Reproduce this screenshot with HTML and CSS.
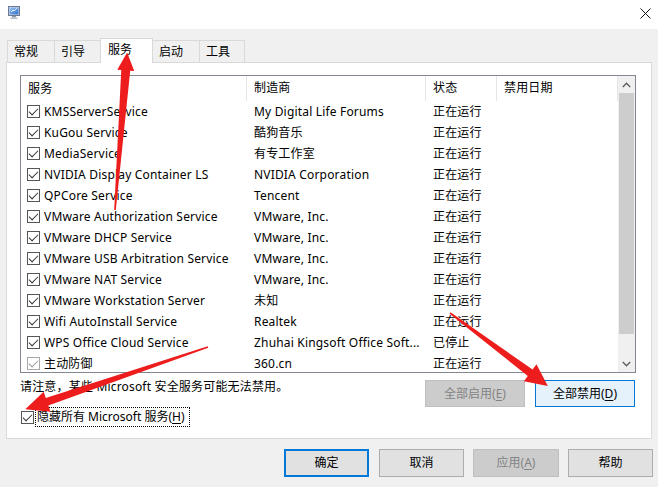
FILE: index.html
```html
<!DOCTYPE html>
<html lang="zh-CN">
<head>
<meta charset="utf-8">
<title>系统配置</title>
<link rel="stylesheet" href="styles.css">
</head>
<body>
<div class="window">
  <div class="titlebar">
    <svg class="app-icon" width="12" height="13" viewBox="0 0 12 13">
      <defs>
        <linearGradient id="scr" x1="0" y1="0" x2="1" y2="1">
          <stop offset="0" stop-color="#9ec6f2"/>
          <stop offset="1" stop-color="#2f6fd0"/>
        </linearGradient>
      </defs>
      <rect x="0.5" y="0.5" width="11" height="9" fill="#d8dde6" stroke="#6b7a90"/>
      <rect x="1.5" y="1.5" width="9" height="7" fill="url(#scr)"/>
      <path d="M3 6 L5 4 L6 5 L9 2" stroke="#ffffff" stroke-width="0.8" fill="none"/>
      <rect x="4" y="10" width="4" height="1.5" fill="#8a94a3"/>
      <rect x="2.5" y="11.5" width="7" height="1.5" fill="#b8bfc9"/>
    </svg>
    <svg class="close" width="11" height="11" viewBox="0 0 11 11">
      <path d="M0.5 0.5 L10.5 10.5 M10.5 0.5 L0.5 10.5" stroke="#111" stroke-width="1" fill="none"/>
    </svg>
  </div>

  <div class="tabs">
    <div class="tab w47">常规</div>
    <div class="tab w46">引导</div>
    <div class="tab tab-active">服务</div>
    <div class="tab w47">启动</div>
    <div class="tab w45">工具</div>
  </div>

  <div class="panel">
    <div class="list">
      <div class="list-main">
        <div class="row header">
          <div class="cell c1">服务</div>
          <div class="cell">制造商</div>
          <div class="cell">状态</div>
          <div class="cell">禁用日期</div>
        </div>

        <div class="row"><div class="cell c1"><span class="cb"></span>KMSServerService</div><div class="cell">My Digital Life Forums</div><div class="cell">正在运行</div><div class="cell"></div></div>
        <div class="row"><div class="cell c1"><span class="cb"></span>KuGou Service</div><div class="cell">酷狗音乐</div><div class="cell">正在运行</div><div class="cell"></div></div>
        <div class="row"><div class="cell c1"><span class="cb"></span>MediaService</div><div class="cell">有专工作室</div><div class="cell">正在运行</div><div class="cell"></div></div>
        <div class="row"><div class="cell c1"><span class="cb"></span>NVIDIA Display Container LS</div><div class="cell">NVIDIA Corporation</div><div class="cell">正在运行</div><div class="cell"></div></div>
        <div class="row"><div class="cell c1"><span class="cb"></span>QPCore Service</div><div class="cell">Tencent</div><div class="cell">正在运行</div><div class="cell"></div></div>
        <div class="row"><div class="cell c1"><span class="cb"></span>VMware Authorization Service</div><div class="cell">VMware, Inc.</div><div class="cell">正在运行</div><div class="cell"></div></div>
        <div class="row"><div class="cell c1"><span class="cb"></span>VMware DHCP Service</div><div class="cell">VMware, Inc.</div><div class="cell">正在运行</div><div class="cell"></div></div>
        <div class="row"><div class="cell c1"><span class="cb"></span>VMware USB Arbitration Service</div><div class="cell">VMware, Inc.</div><div class="cell">正在运行</div><div class="cell"></div></div>
        <div class="row"><div class="cell c1"><span class="cb"></span>VMware NAT Service</div><div class="cell">VMware, Inc.</div><div class="cell">正在运行</div><div class="cell"></div></div>
        <div class="row"><div class="cell c1"><span class="cb"></span>VMware Workstation Server</div><div class="cell">未知</div><div class="cell">正在运行</div><div class="cell"></div></div>
        <div class="row"><div class="cell c1"><span class="cb"></span>Wifi AutoInstall Service</div><div class="cell">Realtek</div><div class="cell">正在运行</div><div class="cell"></div></div>
        <div class="row"><div class="cell c1"><span class="cb"></span>WPS Office Cloud Service</div><div class="cell">Zhuhai Kingsoft Office Soft...</div><div class="cell">已停止</div><div class="cell"></div></div>
        <div class="row"><div class="cell c1"><span class="cb cb-light"></span>主动防御</div><div class="cell">360.cn</div><div class="cell">正在运行</div><div class="cell"></div></div>
      </div>
      <div class="scrollbar">
        <div class="sb-btn">
          <svg width="9" height="6" viewBox="0 0 9 6"><path d="M0.8 5 L4.5 1.3 L8.2 5" stroke="#606060" stroke-width="1.4" fill="none"/></svg>
        </div>
        <div class="sb-thumb"></div>
        <div class="sb-track"></div>
        <div class="sb-btn">
          <svg width="9" height="6" viewBox="0 0 9 6"><path d="M0.8 1 L4.5 4.7 L8.2 1" stroke="#606060" stroke-width="1.4" fill="none"/></svg>
        </div>
      </div>
    </div>

    <div class="note-row">
      <span class="note">请注意，某些 Microsoft 安全服务可能无法禁用。</span>
      <div class="note-btns">
        <div class="btn btn-wide btn-disabled">全部启用(<u>E</u>)</div>
        <div class="btn btn-wide btn-hot">全部禁用(<u>D</u>)</div>
      </div>
    </div>

    <div class="hide-row">
      <span class="cb cb-hide"></span>
      <span class="focus-label">隐藏所有 Microsoft 服务(<u>H</u>)</span>
    </div>
  </div>

  <div class="footer">
    <div class="btn btn-default">确定</div>
    <div class="btn">取消</div>
    <div class="btn btn-disabled btn-apply">应用(<u>A</u>)</div>
    <div class="btn">帮助</div>
  </div>

  <svg class="arrows" width="658" height="487" viewBox="0 0 658 487">
    <g fill="#ee1d1d">
      <g transform="translate(115 210) rotate(-85.6)">
        <polygon points="0,-0.8 140,-4.5 140,-8.5 158,0 140,8.5 140,4.5 0,0.8"/>
      </g>
      <g transform="translate(208 347) rotate(161.2)">
        <polygon points="0,-0.8 170,-4 170,-10.5 193,0 170,10.5 170,4 0,0.8"/>
      </g>
      <g transform="translate(450 313) rotate(36.7)">
        <polygon points="0,-0.8 100,-4 100,-10.5 122,0 100,10.5 100,4 0,0.8"/>
      </g>
    </g>
  </svg>
</div>
</body>
</html>
```

FILE: styles.css
```css
* { box-sizing: border-box; }

html, body {
  margin: 0;
  padding: 0;
}

body {
  width: 658px;
  height: 487px;
  overflow: hidden;
  background: #f0f0f0;
  font-family: "Noto Sans", "Noto Sans CJK SC", sans-serif;
  font-size: 12px;
  letter-spacing: 0.18px;
  color: #000;
}

.window {
  position: relative;
  width: 658px;
  height: 487px;
}

/* title bar */
.titlebar {
  height: 29px;
  background: #ffffff;
  display: flex;
  align-items: flex-start;
  justify-content: space-between;
  padding: 6px 7px 0 8px;
}

.app-icon { display: block; }

.close {
  display: block;
  margin-top: 2px;
}

/* tabs */
.tabs {
  display: flex;
  align-items: flex-end;
  height: 24px;
  margin-top: 9px;
  padding-left: 7px;
  position: relative;
  z-index: 2;
  letter-spacing: 0;
}

.tab {
  height: 22px;
  border: 1px solid #d9d9d9;
  border-bottom: none;
  margin-right: -1px;
  background: #f0f0f0;
  padding: 2px 0 0 6px;
  line-height: 18px;
}

.w47 { width: 48px; }
.w46 { width: 47px; }
.w45 { width: 46px; }

.tab-active {
  width: 53px;
  height: 25px;
  margin-bottom: -1px;
  background: #ffffff;
  padding: 2px 0 0 7px;
  position: relative;
  z-index: 3;
}

/* panel */
.panel {
  margin-left: 6px;
  width: 646px;
  height: 377px;
  background: #ffffff;
  border: 1px solid #d9d9d9;
  padding: 12px 0 0 13px;
  position: relative;
  z-index: 1;
}

.list {
  width: 616px;
  height: 298px;
  border: 1px solid #828790;
  display: flex;
  overflow: hidden;
}

.list-main {
  width: 597px;
  overflow: hidden;
}

.row {
  display: grid;
  grid-template-columns: 226px 179px 71px 121px;
  height: 21px;
  line-height: 21px;
}

.row.header {
  height: 25px;
  line-height: 24px;
}

.row.header .cell {
  border-right: 1px solid #e5e5e5;
}

.cell {
  padding-left: 7px;
  white-space: nowrap;
  overflow: hidden;
}

.cell.c1 {
  padding-left: 6px;
  display: flex;
  align-items: center;
}

.row.header .cell.c1 { padding-left: 7px; }

/* checkbox */
.cb {
  display: inline-block;
  position: relative;
  flex: none;
  width: 13px;
  height: 13px;
  border: 1px solid #555555;
  margin-right: 4px;
  background: #ffffff;
}

.cb::after {
  content: "";
  position: absolute;
  left: 3px;
  top: 0px;
  width: 4px;
  height: 8px;
  border-right: 1.2px solid #333333;
  border-bottom: 1.2px solid #333333;
  transform: rotate(45deg);
}

.cb-light { border-color: #a8a8a8; }
.cb-light::after { border-color: #9a9a9a; }

/* scrollbar */
.scrollbar {
  width: 17px;
  background: #f0f0f0;
  display: flex;
  flex-direction: column;
}

.sb-btn {
  height: 17px;
  display: flex;
  align-items: center;
  justify-content: center;
}

.sb-thumb {
  height: 241px;
  margin: 0 1px;
  background: #cdcdcd;
}

.sb-track { flex: 1; }

/* note row */
.note-row {
  width: 615px;
  margin-top: 7px;
  height: 27px;
  display: flex;
  justify-content: space-between;
  align-items: flex-start;
}

.note {
  line-height: 16px;
  margin-top: -1px;
}

.note-btns {
  display: flex;
  gap: 10px;
}

.btn {
  width: 85px;
  height: 28px;
  background: #e1e1e1;
  border: 1px solid #adadad;
  display: flex;
  align-items: center;
  justify-content: center;
  line-height: 1;
  letter-spacing: 0;
}

.btn-wide {
  width: 100px;
  height: 27px;
}

.btn-disabled {
  background: #cccccc;
  border-color: #bfbfbf;
  color: #838383;
}

.btn-hot {
  background: #e5f1fb;
  border-color: #0078d7;
}

.btn-default {
  border: 2px solid #0078d7;
}

.btn-apply { width: 86px; }

u { text-decoration: underline; text-underline-offset: 2px; }

/* hide row */
.hide-row {
  height: 20px;
  display: flex;
  align-items: center;
  padding-left: 1px;
}

.cb-hide {
  margin-right: 1px;
}

.focus-label {
  border: 1px dotted #000;
  height: 20px;
  line-height: 18px;
  padding: 0 1px;
  width: 155px;
  white-space: nowrap;
  letter-spacing: 0;
}

/* footer */
.footer {
  display: flex;
  justify-content: flex-end;
  gap: 9px;
  margin-top: 10px;
  padding-right: 5px;
}

.footer .btn-default { margin-right: 1px; }

/* annotation arrows */
.arrows {
  position: absolute;
  left: 0;
  top: 0;
  pointer-events: none;
  z-index: 10;
}
```
